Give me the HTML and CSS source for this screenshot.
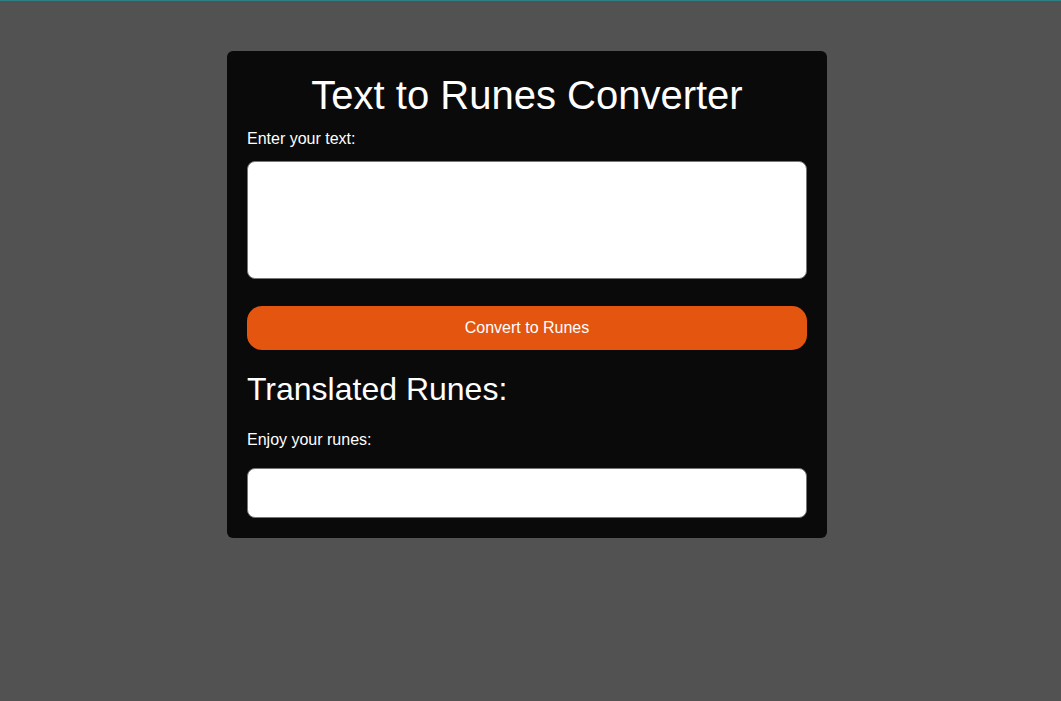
FILE: index.html
```html
<!DOCTYPE html>
<html>
<head>
<meta charset="utf-8">
<link rel="stylesheet" href="styles.css">
</head>
<body>
<div class="topline"></div>
<main class="card">
  <h1 class="title">Text to Runes Converter</h1>
  <label class="label label-input" for="txt">Enter your text:</label>
  <textarea id="txt" class="input"></textarea>
  <button class="btn">Convert to Runes</button>
  <h2 class="subtitle">Translated Runes:</h2>
  <p class="label label-output">Enjoy your runes:</p>
  <div class="output"></div>
</main>
</body>
</html>
```
FILE: styles.css
```css
html, body {
  margin: 0;
  padding: 0;
  background: #525252;
  font-family: "Liberation Sans", Arial, sans-serif;
  color: #fff;
}
.topline {
  height: 1px;
  background: #2f8084;
}
.card {
  width: 600px;
  box-sizing: border-box;
  margin: 50px 0 0 calc(50% - 303.5px);
  padding: 20px;
  background: #0a0a0a;
  border-radius: 6px;
  display: flex;
  flex-direction: column;
}
.title {
  margin: 1px 0 0;
  font-size: 40px;
  font-weight: normal;
  line-height: 46px;
  text-align: center;
}
.label {
  margin: 0;
  font-size: 16px;
  line-height: 18px;
}
.label-input {
  margin-top: 12px;
}
.input {
  margin-top: 13px;
  height: 118px;
  box-sizing: border-box;
  border: 1px solid #767676;
  border-radius: 8px;
  background: #fff;
  resize: none;
  font-family: inherit;
}
.btn {
  margin-top: 27px;
  height: 44px;
  border: none;
  border-radius: 15px;
  background: #e4550f;
  color: #fff;
  font-family: inherit;
  font-size: 16px;
}
.subtitle {
  margin: 21px 0 0;
  font-size: 32px;
  font-weight: normal;
  line-height: 37px;
}
.label-output {
  margin-top: 23px;
}
.output {
  margin-top: 19px;
  height: 50px;
  box-sizing: border-box;
  border: 1px solid #767676;
  border-radius: 8px;
  background: #fff;
}
```
